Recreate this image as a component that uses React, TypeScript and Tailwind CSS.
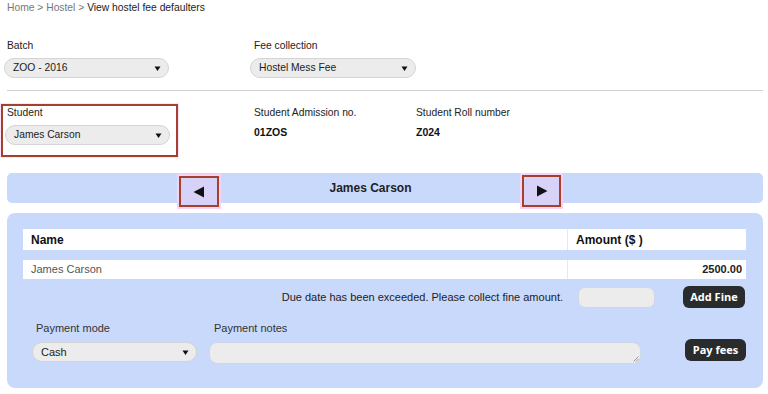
import React from "react";

const Caret = () => (
  <svg width="7" height="7" viewBox="0 0 7 7" className="shrink-0">
    <polygon points="0.5,1.5 6.5,1.5 3.5,6" fill="#111" />
  </svg>
);

const Select = ({ value, w, size }: { value: string; w: string; size: string }) => (
  <div
    className={`${w} ${size} h-[20px] rounded-full border border-[#d4d4d4] bg-[#ececec] flex items-center justify-between pl-[8px] pr-[7px] text-[#222]`}
  >
    <span>{value}</span>
    <Caret />
  </div>
);

export default function App() {
  return (
    <div
      className="w-[768px] h-[394px] bg-white overflow-hidden text-[#333]"
      style={{ fontFamily: '"Liberation Sans", Arial, sans-serif' }}
    >
      {/* breadcrumb */}
      <div className="h-[16px] pl-[7px] pt-[1px] text-[10.3px] leading-[14px] text-[#777]">
        Home &gt; Hostel &gt; <span className="text-[#222]">View hostel fee defaulters</span>
      </div>

      {/* filters */}
      <div className="mt-[23px] flex">
        <div className="w-[250px] pl-[4px]">
          <div className="pl-[3px] text-[10.3px] leading-[14px] text-[#222]">Batch</div>
          <div className="mt-[5px]">
            <Select value="ZOO - 2016" w="w-[165px]" size="text-[10.3px]" />
          </div>
        </div>
        <div className="w-[170px]">
          <div className="pl-[4px] text-[10.3px] leading-[14px] text-[#222]">Fee collection</div>
          <div className="mt-[5px]">
            <Select value="Hostel Mess Fee" w="w-[166px]" size="text-[10.3px]" />
          </div>
        </div>
      </div>

      <div className="mt-[12px] ml-[7px] mr-[5px] h-px bg-[#d2d2d2]" />

      {/* student row */}
      <div className="mt-[13px] flex">
        <div className="ml-[1px] w-[177px] h-[53px] border-2 border-[#a3402f] pl-[2px] pt-[0px] shadow-[0_0_0_1px_#fbe3fa]">
          <div className="pl-[2px] text-[10.3px] leading-[14px] text-[#222]">Student</div>
          <div className="mt-[5px]">
            <Select value="James Carson" w="w-[165px]" size="text-[10.3px]" />
          </div>
        </div>
        <div className="ml-[76px] w-[162px] pt-[2px]">
          <div className="text-[10.3px] leading-[14px] text-[#222]">Student Admission no.</div>
          <div className="mt-[5px] text-[10.5px] leading-[14px] font-bold text-[#111]">01ZOS</div>
        </div>
        <div className="pt-[2px]">
          <div className="text-[10.3px] leading-[14px] text-[#222]">Student Roll number</div>
          <div className="mt-[5px] text-[10.5px] leading-[14px] font-bold text-[#111]">Z024</div>
        </div>
      </div>

      {/* nav bar */}
      <div className="mt-[16px] ml-[7px] mr-[5px] h-[30px] rounded-[5px] bg-[#c9d9fb] flex items-start">
        <div className="ml-[172px] mt-[3px] w-[40px] h-[31px] border-2 border-[#a3402f] bg-[#d7d3f8] flex items-center justify-center shadow-[0_0_0_2px_#f6d2f4]">
          <svg width="12" height="12" viewBox="0 0 12 12">
            <polygon points="11,0.5 11,11.5 0.5,6" fill="#111" />
          </svg>
        </div>
        <div className="flex-1 h-[30px] flex items-center justify-center text-[12px] font-bold text-[#222]">
          James Carson
        </div>
        <div className="mr-[202px] mt-[2px] w-[39px] h-[32px] border-2 border-[#a3402f] bg-[#d7d3f8] flex items-center justify-center shadow-[0_0_0_2px_#f6d2f4]">
          <svg width="12" height="12" viewBox="0 0 12 12">
            <polygon points="1,0.5 1,11.5 11.5,6" fill="#111" />
          </svg>
        </div>
      </div>

      {/* main panel */}
      <div className="mt-[10px] ml-[7px] mr-[5px] h-[175px] rounded-[8px] bg-[#c9d9fb] pt-[16px] px-[16px]">
        <div className="mr-[1px] h-[21px] bg-white flex text-[12px] font-bold text-[#111]">
          <div className="w-[545px] pl-[8px] flex items-center border-r border-[#e4e8f2]">Name</div>
          <div className="flex-1 pl-[8px] flex items-center">Amount ($ )</div>
        </div>
        <div className="mt-[10px] mr-[1px] h-[19px] bg-white flex text-[11px]">
          <div className="w-[545px] pl-[8px] flex items-center text-[#555] border-r border-[#e4e8f2]">James Carson</div>
          <div className="flex-1 pr-[4px] flex items-center justify-end font-bold text-[#222]">2500.00</div>
        </div>

        <div className="mt-[7px] flex items-center h-[22px]">
          <div className="w-[540px] text-right text-[11px] text-[#222]">
            Due date has been exceeded. Please collect fine amount.
          </div>
          <div className="ml-[15px] w-[77px] h-[21px] rounded-[7px] border border-[#cfd6e6] bg-[#ececec]" />
          <div
            className="ml-[28px] w-[62px] h-[22px] rounded-[6px] bg-[#292b2d] text-white text-[11px] font-bold flex items-center justify-center"
            style={{ fontFamily: '"Open Sans", "Liberation Sans", sans-serif' }}
          >
            Add Fine
          </div>
        </div>

        <div className="mt-[13px] flex">
          <div className="w-[186px] pl-[9px]">
            <div className="pl-[4px] text-[11px] leading-[14px] text-[#333]">Payment mode</div>
            <div className="mt-[7px]">
              <Select value="Cash" w="w-[165px]" size="text-[11px]" />
            </div>
          </div>
          <div className="w-[476px]">
            <div className="pl-[5px] text-[11px] leading-[14px] text-[#333]">Payment notes</div>
            <div className="mt-[7px] relative w-[432px] h-[22px] rounded-[8px] border border-[#cfd6e6] bg-[#ececec]">
              <svg width="6" height="6" viewBox="0 0 6 6" className="absolute right-[1px] bottom-[1px]">
                <line x1="0.5" y1="5.5" x2="5.5" y2="0.5" stroke="#888" strokeWidth="0.8" />
                <line x1="3" y1="5.5" x2="5.5" y2="3" stroke="#888" strokeWidth="0.8" />
              </svg>
            </div>
          </div>
          <div
            className="mt-[18px] w-[61px] h-[22px] rounded-[6px] bg-[#292b2d] text-white text-[11px] font-bold flex items-center justify-center"
            style={{ fontFamily: '"Open Sans", "Liberation Sans", sans-serif' }}
          >
            Pay fees
          </div>
        </div>
      </div>
    </div>
  );
}
